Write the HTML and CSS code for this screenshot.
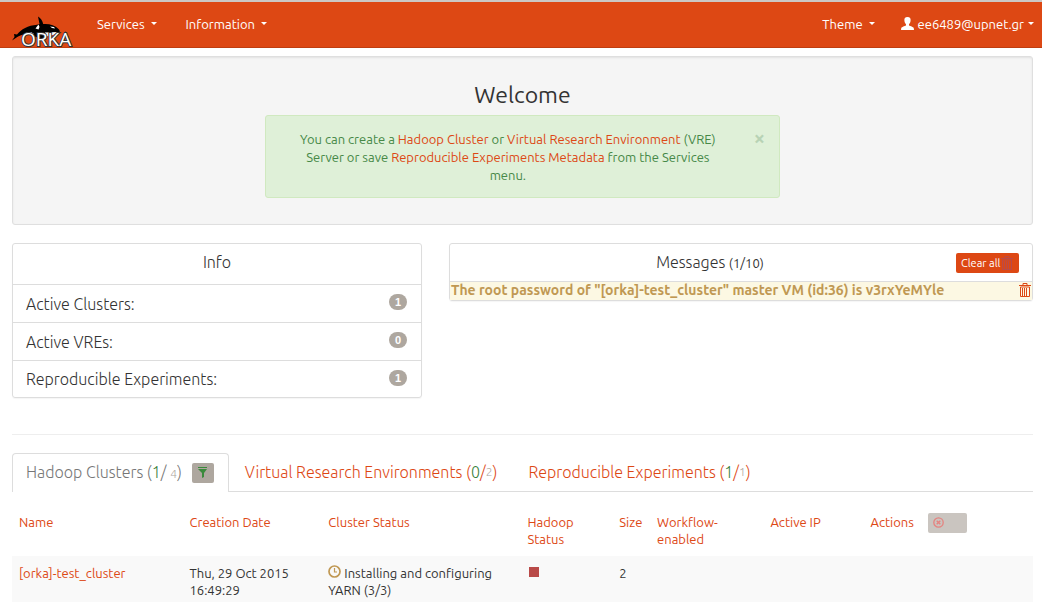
FILE: index.html
```html
<!DOCTYPE html>
<html lang="en">
<head>
<meta charset="utf-8">
<meta name="viewport" content="width=device-width, initial-scale=1">
<title>Orka</title>
<link rel="stylesheet" href="styles.css">
</head>
<body>
<svg class="sprite" aria-hidden="true">
  <symbol id="trash" viewBox="0 0 12 14">
    <path fill="none" stroke="currentColor" d="M4 2V.5h4V2M0 2.500h12M1.500 4v9.500h9V4zM3.500 5v8M5.500 5v8M7.500 5v8"/>
  </symbol>
</svg>
<nav class="navbar">
  <a class="brand" href="#" aria-label="Orka">
    <svg class="logo" viewBox="0 0 58 31">
      <path fill="#000" d="M0 24.500 2.500 21 2 18 5 18.500C9 13.500 16 9.500 25 8.800L27.500 8 26 .5C29 2 30.500 5 31.200 8 37 7.500 43 9 46.500 13 48.500 15 48 17 46 17.500L37 19 29 23 18 18.500C12 17.500 8 19 4.500 21.500z"/>
      <path fill="#fff" d="M23.500 12.500l3-4 1 2.500-1 2.500zM38 10.500l4 .5 1 1.500-3-.5zM14 16l5 0 3 2-6-.5zM33 16.500l13-.5 1 1-6 2-9 2z"/>
      <text class="logo-text" x="9" y="30">ORKA</text>
    </svg>
  </a>
  <button class="nav-item" type="button">Services <span class="caret"></span></button>
  <button class="nav-item" type="button">Information <span class="caret"></span></button>
  <div class="nav-right">
    <button class="nav-item" type="button">Theme <span class="caret"></span></button>
    <button class="nav-item nav-user" type="button">
      <svg class="user-icon" viewBox="0 0 13 13"><path fill="#fff" d="M6.500 0C9 0 9.800 1.500 9.600 3.500 9.500 5.500 8.800 6.500 8 7.200v1.300c1.500.8 4 1.300 4.700 2.300L13 13H0l.3-2.200C1 9.800 3.500 9.300 5 8.500V7.200C4.200 6.500 3.500 5.500 3.400 3.500 3.200 1.500 4 0 6.500 0z"/></svg>
      <span>ee6489@upnet.gr</span><span class="caret"></span>
    </button>
  </div>
</nav>
<main class="page">
  <section class="well">
    <h1 class="welcome">Welcome</h1>
    <div class="alert">
      <p class="alert-text">You can create a <a href="#">Hadoop Cluster</a> or <a href="#">Virtual Research Environment</a> (VRE) Server or save <a href="#">Reproducible Experiments Metadata</a> from the Services menu.</p>
      <button class="close" type="button" aria-label="Close">×</button>
    </div>
  </section>
  <div class="panels">
    <section class="panel">
      <h2 class="info-title">Info</h2>
      <ul class="info-list">
        <li>Active Clusters: <span class="badge">1</span></li>
        <li>Active VREs: <span class="badge">0</span></li>
        <li>Reproducible Experiments: <span class="badge">1</span></li>
      </ul>
    </section>
    <section class="panel">
      <header class="msg-head">
        <h2 class="msg-title">Messages <small>(1/10)</small></h2>
        <button class="clear" type="button">Clear all<svg class="clear-icon"><use href="#trash"/></svg></button>
      </header>
      <div class="msg">
        <span>The root password of "[orka]-test_cluster" master VM (id:36) is v3rxYeMYle</span>
        <button class="msg-delete" type="button" aria-label="Delete message"><svg><use href="#trash"/></svg></button>
      </div>
    </section>
  </div>
  <hr class="rule">
  <div class="tabs">
    <div class="tab tab-active">
      <span>Hadoop Clusters (<span class="active-count">1</span>/ <small>4</small>)</span>
      <button class="filter" type="button" aria-label="Filter">
        <svg viewBox="0 0 9 11"><path fill="#3a8a3c" d="M0 0h9v1H0zM0 2h9L6 6v4l-2 1V6z"/></svg>
      </button>
    </div>
    <a class="tab" href="#">Virtual Research Environments (<span class="active-count">0</span>/<small>2</small>)</a>
    <a class="tab" href="#">Reproducible Experiments (<span class="active-count">1</span>/<small>1</small>)</a>
  </div>
  <table class="clusters">
    <colgroup>
      <col class="c-name"><col class="c-date"><col class="c-status"><col class="c-hadoop"><col class="c-size"><col class="c-flow"><col class="c-ip"><col class="c-actions">
    </colgroup>
    <thead>
      <tr>
        <th><a href="#">Name</a></th>
        <th><a href="#">Creation Date</a></th>
        <th><a href="#">Cluster Status</a></th>
        <th><a href="#">Hadoop Status</a></th>
        <th><a href="#">Size</a></th>
        <th><a href="#">Workflow-enabled</a></th>
        <th><a href="#">Active IP</a></th>
        <th>
          <div class="actions">
            <a href="#">Actions</a>
            <button class="remove" type="button" aria-label="Remove" disabled>
              <svg viewBox="0 0 11 11"><g fill="none" stroke="#d9403c"><circle cx="5.500" cy="5.500" r="4.700" stroke-width="1.300"/><path stroke-width="1.400" d="M3.700 3.700l3.600 3.600M7.300 3.700 3.700 7.300"/></g></svg>
            </button>
          </div>
        </th>
      </tr>
    </thead>
    <tbody>
      <tr>
        <td><a href="#">[orka]-test_cluster</a></td>
        <td>Thu, 29 Oct 2015 16:49:29</td>
        <td><svg class="clock" viewBox="0 0 13 13"><g fill="none" stroke="#c09853"><circle cx="6.500" cy="6.500" r="5.500" stroke-width="1.700"/><path stroke-width="1.200" d="M6.500 3v4H9"/></g></svg> Installing and configuring YARN (3/3)</td>
        <td><span class="stopped"></span></td>
        <td>2</td>
        <td></td>
        <td></td>
        <td></td>
      </tr>
    </tbody>
  </table>
</main>
</body>
</html>
```
FILE: styles.css
```css
* { box-sizing: border-box; }
body {
  margin: 0;
  background: #fff;
  color: #333;
  font: 13px/18px "Ubuntu", "Noto Sans", sans-serif;
}
button {
  margin: 0;
  padding: 0;
  border: 0;
  background: none;
  color: inherit;
  font: inherit;
}
a { color: #dd4814; text-decoration: none; }
h1, h2, p, ul { margin: 0; padding: 0; font-weight: 400; }
svg { display: block; }
.sprite { position: absolute; width: 0; height: 0; }

.navbar {
  display: flex;
  height: 48px;
  padding: 0 8px 0 12px;
  background: #dd4814;
  border-top: 2px solid #ccc8c4;
  border-bottom: 1px solid #bf3e11;
  color: #fff;
}
.brand { align-self: flex-end; margin-right: 27px; }
.logo { width: 58px; height: 31px; overflow: visible; }
.logo-text {
  font: 19px "Open Sans", sans-serif;
  fill: #fff;
  stroke: #333;
  stroke-width: 2px;
  paint-order: stroke;
}
.nav-item {
  display: flex;
  align-items: center;
  gap: 6px;
  margin-right: 29px;
  padding-bottom: 2px;
  white-space: nowrap;
}
.nav-right { display: flex; margin-left: auto; }
.nav-right .nav-item { margin-right: 26px; }
.nav-right .nav-user { gap: 4px; margin-right: 0; }
.user-icon { width: 13px; height: 13px; }
.caret {
  border: 3px solid transparent;
  border-top-color: #fff;
  border-bottom: 0;
}

.page { padding: 8px 9px 0 12px; }
.well {
  padding: 26px 19px;
  background: #f5f5f5;
  border: 1px solid #dfdfdf;
  border-radius: 3px;
  box-shadow: inset 0 1px 2px rgba(0, 0, 0, .08);
  text-align: center;
}
.welcome { padding-bottom: 8px; font-size: 23px; line-height: 24px; }
.alert {
  display: flex;
  gap: 18px;
  width: 52.5%;
  margin: 0 auto;
  padding: 14px 14px 13px;
  background: #dff0d8;
  border: 1px solid #d0e9c0;
  border-radius: 3px;
  color: #468847;
}
.alert-text { flex: 1; padding: 0 10px; }
.close {
  align-self: flex-start;
  color: #b8d3b5;
  font-size: 20px;
  font-weight: 700;
  line-height: 16px;
}

.panels {
  display: grid;
  grid-template-columns: 410fr 584fr;
  align-items: start;
  gap: 27px;
  margin-top: 18px;
}
.panel {
  min-height: 58px;
  border: 1px solid #ddd;
  border-radius: 3px;
  box-shadow: 0 1px 1px rgba(0, 0, 0, .04);
}
.info-title {
  padding: 8px 0 12px;
  font-size: 16px;
  font-weight: 300;
  line-height: 20px;
  text-align: center;
}
.info-list { list-style: none; font-size: 16px; font-weight: 300; }
.info-list li {
  display: flex;
  align-items: center;
  justify-content: space-between;
  height: 38px;
  padding: 0 14px 0 13px;
  border-top: 1px solid #ddd;
}
.info-list li:last-child { height: 37px; }
.badge {
  width: 18px;
  height: 16px;
  margin-bottom: 3px;
  background: #aea79f;
  border-radius: 8px;
  color: #fff;
  font: 700 11px/16px "Liberation Sans", sans-serif;
  text-align: center;
}
.msg-head {
  display: flex;
  align-items: center;
  height: 38px;
  padding-right: 13px;
  border-bottom: 1px solid #ddd;
}
.msg-title {
  flex: 1;
  padding-left: 14px;
  font-size: 16px;
  font-weight: 300;
  text-align: center;
}
.msg-title small { font-size: 13px; font-weight: 400; }
.clear {
  display: flex;
  align-items: center;
  width: 63px;
  height: 20px;
  padding-left: 5px;
  background: #dd4814;
  border-radius: 2px;
  color: #fff;
  font-size: 11px;
  white-space: nowrap;
}
.clear-icon { flex: none; width: 12px; height: 14px; margin-left: 1px; color: #b94a48; }
.msg {
  display: flex;
  align-items: center;
  justify-content: space-between;
  height: 18px;
  padding: 0 1px 2px;
  background: #fcf8e3;
  color: #c09853;
  font-size: 14px;
  font-weight: 700;
}
.msg-delete { color: #dd4814; }
.msg-delete svg { width: 12px; height: 14px; }

.rule { margin: 36px 0 18px; border: 0; border-top: 1px solid #eee; }
.tabs { display: flex; height: 39px; border-bottom: 1px solid #ddd; font-size: 16px; font-weight: 300; }
.tab {
  display: flex;
  align-items: center;
  height: 39px;
  margin-right: 1px;
  padding: 0 14px 2px;
  border: 1px solid transparent;
  border-bottom: 0;
  border-radius: 4px 4px 0 0;
  white-space: pre;
}
.tab-active { gap: 10px; padding: 0 14px 1px 13px; background: #fff; border-color: #ddd; color: #777; }
.tab small { color: #aea79f; font-size: 12px; }
.active-count { color: #38803a; }
.filter {
  display: flex;
  align-items: center;
  justify-content: center;
  width: 22px;
  height: 20px;
  background: #aea79f;
  border-radius: 2px;
  white-space: normal;
}
.filter svg { width: 9px; height: 11px; }

.clusters {
  width: 100%;
  border-collapse: collapse;
  table-layout: fixed;
  line-height: 17px;
}
.clusters th, .clusters td {
  padding: 9px 7px;
  text-align: left;
  vertical-align: top;
  font-weight: 400;
}
.clusters th { padding: 22px 7px 8px; }
.clusters tbody tr { background: #f9f9f9; }
.c-name { width: 16.7%; }
.c-date { width: 13.6%; }
.c-status { width: 19.5%; }
.c-hadoop { width: 9%; }
.c-size { width: 3.7%; }
.c-flow { width: 11.1%; }
.c-ip { width: 9.8%; }
.c-actions { width: 16.6%; }
.actions { display: flex; align-items: center; gap: 14px; height: 17px; }
.remove { width: 39px; height: 20px; padding-left: 5px; background: #aea79f; border-radius: 2px; opacity: .65; }
.remove svg { width: 11px; height: 11px; }
.clock { display: inline-block; width: 13px; height: 13px; }
.stopped { display: block; width: 10px; height: 10px; margin: 2px; background: #b94a48; }
```
